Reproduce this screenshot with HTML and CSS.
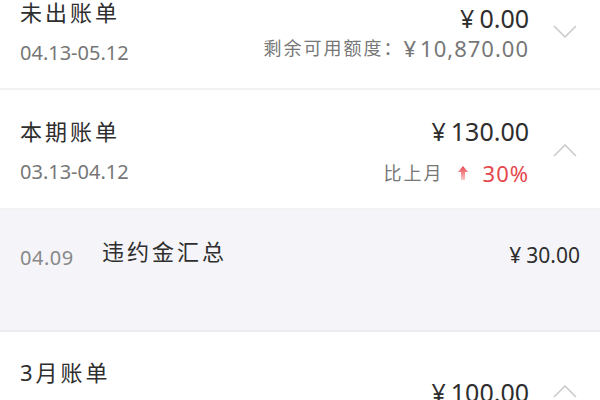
FILE: index.html
```html
<!DOCTYPE html>
<html>
    <head>
        <meta charset="UTF-8">
        <meta name="viewport" content="width=device-width, initial-scale=1">
        <link rel="stylesheet" href="styles.css">
    </head>
    <body>
        <div class="bills">
            <!-- 未出账单 -->
            <section class="bill">
                <div class="bill-info">
                    <div class="bill-title">未出账单</div>
                    <div class="bill-date">04.13-05.12</div>
                </div>
                <div class="bill-sum compact">
                    <div class="bill-amount"><span class="yen">¥</span>0.00</div>
                    <div class="bill-note">剩余可用额度：<span class="num"><span class="yen">¥</span>10,870.00</span></div>
                </div>
                <svg class="chevron" viewBox="0 0 24 13"><polyline points="1,1 12,12 23,1"/></svg>
            </section>

            <!-- 本期账单 -->
            <section class="bill">
                <div class="bill-info">
                    <div class="bill-title">本期账单</div>
                    <div class="bill-date">03.13-04.12</div>
                </div>
                <div class="bill-sum">
                    <div class="bill-amount"><span class="yen">¥</span>130.00</div>
                    <div class="bill-note">
                        比上月
                        <svg class="up-arrow" viewBox="0 0 10 14">
                            <defs>
                                <linearGradient id="upfade" x1="0" y1="0" x2="0" y2="1">
                                    <stop offset="0" stop-color="#e8464c"/>
                                    <stop offset="1" stop-color="#f9c9cb"/>
                                </linearGradient>
                            </defs>
                            <path d="M5 0 L10 6 L7 6 L7 14 L3 14 L3 6 L0 6 Z" fill="url(#upfade)"/>
                        </svg>
                        <span class="num rise">30%</span>
                    </div>
                </div>
                <svg class="chevron" viewBox="0 0 24 13"><polyline points="1,12 12,1 23,12"/></svg>
            </section>

            <div class="bill-detail">
                <div class="detail-date">04.09</div>
                <div class="detail-name">违约金汇总</div>
                <div class="detail-amount"><span class="yen">¥</span>30.00</div>
            </div>

            <!-- 3月账单 -->
            <section class="bill">
                <div class="bill-info">
                    <div class="bill-title">3月账单</div>
                    <div class="bill-date">02.13-03.12</div>
                </div>
                <div class="bill-sum">
                    <div class="bill-amount"><span class="yen">¥</span>100.00</div>
                </div>
                <svg class="chevron" viewBox="0 0 24 13"><polyline points="1,12 12,1 23,12"/></svg>
            </section>
        </div>
    </body>
</html>
```

FILE: styles.css
```css
body {
    margin: 0;
    background: #fff;
    font-family: "Noto Sans", "Noto Sans CJK SC", sans-serif;
    color: #2e2e2e;
    overflow: hidden;
}

* {
    box-sizing: border-box;
}

/* first card is scrolled a little past the top */
.bills {
    margin-top: -28px;
}

/* one bill card */
.bill {
    display: flex;
    align-items: center;
    padding: 26px 23px 23px 20px;
    border-bottom: 2px solid #f2f2f2;
}

.bill-info {
    flex: 1;
    display: flex;
    flex-direction: column;
    gap: 15px;
}

.bill-title {
    font-size: 22px;
    line-height: 28px;
    letter-spacing: 3px;
}

.bill-date {
    font-size: 20px;
    line-height: 24px;
    color: #777;
}

/* amount column on the right */
.bill-sum {
    display: flex;
    flex-direction: column;
    align-items: flex-end;
    gap: 15px;
    margin-right: 24px;
}

.bill-sum.compact {
    gap: 3px;
}

.bill-amount {
    font-size: 25px;
    line-height: 30px;
}

.yen {
    margin-right: 5px;
}

.bill-note {
    display: flex;
    align-items: center;
    font-size: 18px;
    line-height: 24px;
    letter-spacing: 2px;
    color: #777;
}

/* digits run a little larger than the chinese text */
.bill-note .num {
    font-size: 22px;
    letter-spacing: 1px;
}

.bill-note .yen {
    margin-right: 3px;
}

.up-arrow {
    width: 10px;
    height: 14px;
    margin: 0 15px 0 14px;
}

.rise {
    color: #e5484d;
}

.chevron {
    width: 24px;
    height: 13px;
    fill: none;
    stroke: #c9c9c9;
    stroke-width: 1.5;
}

/* expanded detail row */
.bill-detail {
    display: flex;
    align-items: flex-start;
    height: 122px;
    padding: 27px 20px 0 20px;
    background: #f5f5f9;
    border-bottom: 2px solid #ececf0;
}

.detail-date {
    width: 82px;
    margin-top: 9px;
    font-size: 20px;
    line-height: 24px;
    letter-spacing: 0.5px;
    color: #888;
}

.detail-name {
    flex: 1;
    font-size: 22px;
    line-height: 28px;
    letter-spacing: 3px;
}

.detail-amount {
    margin-top: 6px;
    font-size: 21px;
    line-height: 24px;
}
```
